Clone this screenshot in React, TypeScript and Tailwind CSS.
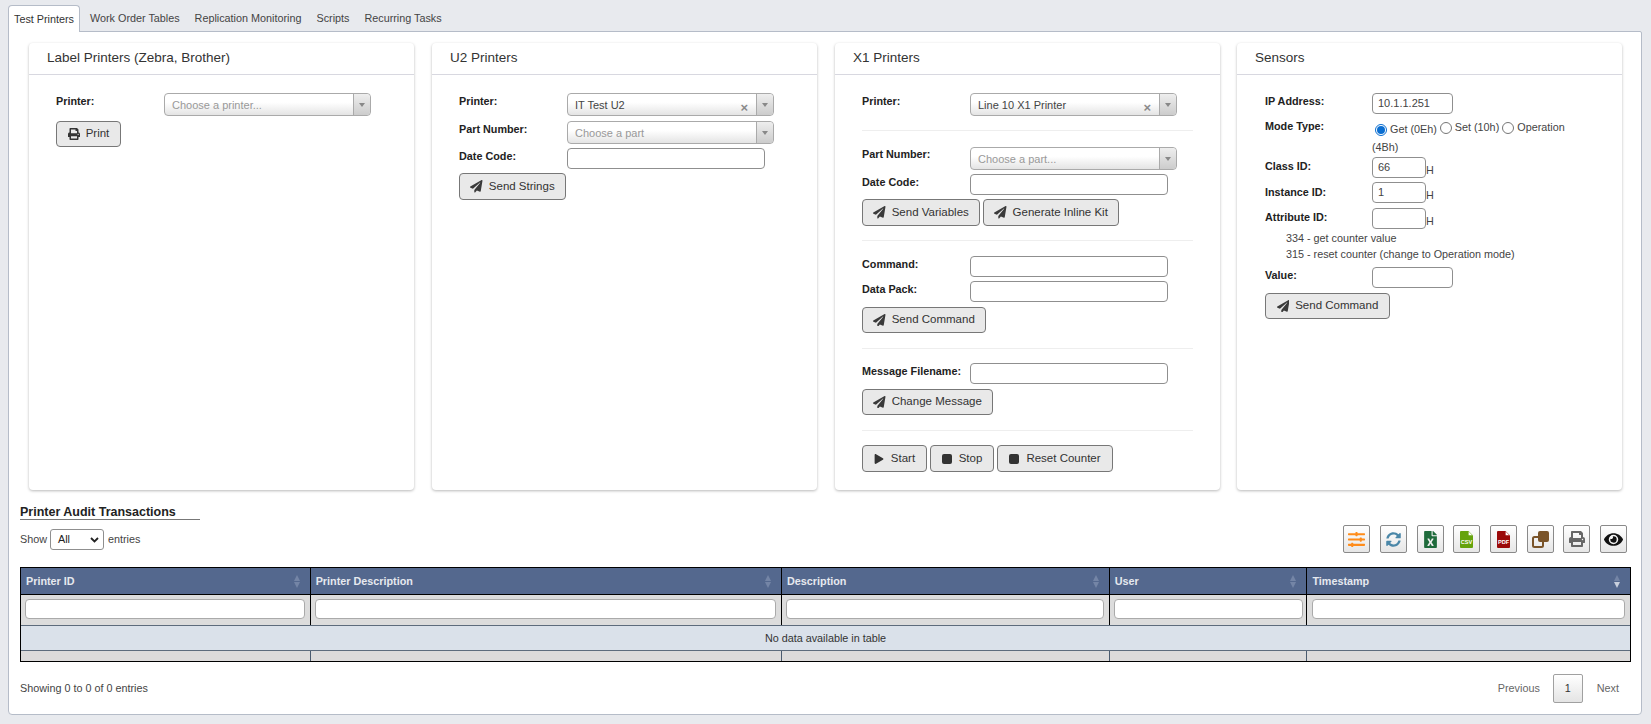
import React from "react";
import { FaPrint, FaPaperPlane, FaPlay, FaSlidersH, FaSyncAlt, FaFileExcel, FaEye } from "react-icons/fa";

function Select({ value, placeholder, clear }: { value?: string; placeholder?: string; clear?: boolean }) {
  return (
    <div className="flex h-[23px] w-[207px] items-center rounded-[4px] border border-[#aaaaaa] bg-gradient-to-b from-white from-40% to-[#e4e4e4] text-[11px]">
      <span className={value ? "flex-1 pl-[7px] pt-[2px] text-[#444444]" : "flex-1 pl-[7px] pt-[1px] text-[#999999]"}>{value ?? placeholder}</span>
      {clear && <span className="mr-[8px] mt-[5px] text-[13px] font-bold leading-none text-[#8a8a8a]">×</span>}
      <span className="flex h-full w-[17px] items-center justify-center rounded-r-[4px] border-l border-[#aaaaaa] bg-gradient-to-b from-[#eeeeee] to-[#cccccc]">
        <span className="h-0 w-0 border-x-[3px] border-t-[4px] border-x-transparent border-t-[#888888]" />
      </span>
    </div>
  );
}

function Input({ w = "w-[198px]", value }: { w?: string; value?: string }) {
  return (
    <div className={`flex h-[21px] ${w} items-center rounded-[4px] border border-[#8f8f8f] bg-white pl-[5px] text-[11px] text-[#444444]`}>{value}</div>
  );
}

function Btn({ icon, label, w, h = "h-[26px]", gap = "gap-[6px]" }: { icon: React.ReactNode; label: string; w: string; h?: string; gap?: string }) {
  return (
    <div className={`flex ${h} ${w} items-center justify-center ${gap} rounded-[4px] border border-[#777777] bg-[#e9e9e9] text-[11.5px] text-[#333333]`}>
      {icon}
      <span>{label}</span>
    </div>
  );
}

function Label({ children, w = "w-[108px]", pt = "pt-[1px]" }: { children: React.ReactNode; w?: string; pt?: string }) {
  return <div className={`${w} ${pt} shrink-0 text-[10.8px] font-bold leading-[14px] text-[#222222]`}>{children}</div>;
}

function Card({ title, children, cls = "" }: { title: string; children: React.ReactNode; cls?: string }) {
  return (
    <section className={`h-[447px] w-[385px] rounded-[4px] bg-white shadow-[0_1px_3px_rgba(0,0,0,0.28)] ${cls}`}>
      <h2 className="flex h-[32px] items-center border-b border-[#d8d8e0] pb-[1px] pl-[18px] text-[13.5px] font-normal text-[#333333]">{title}</h2>
      {children}
    </section>
  );
}

const send = <FaPaperPlane className="h-[12.5px] w-[12.5px] text-[#3a3a3a]" />;
const stop = <span className="h-[10px] w-[10px] rounded-[2px] bg-[#333333]" />;

function ToolBtn({ children }: { children: React.ReactNode }) {
  return <div className="flex h-[28px] w-[27px] items-center justify-center rounded-[2px] border border-[#8a8a8a] bg-gradient-to-b from-white to-[#e6e6e6]">{children}</div>;
}

function FileIcon({ color, label }: { color: string; label: string }) {
  return (
    <svg width="13" height="17" viewBox="0 0 13 17">
      <path d="M1 0h7.5L13 4.5V16a1 1 0 0 1-1 1H1a1 1 0 0 1-1-1V1a1 1 0 0 1 1-1z" fill={color} />
      <path d="M8.6 0.6v3.6h3.6z" fill="#ffffff" />
      <text x="6.5" y="12.5" textAnchor="middle" fontSize="5.6" fontWeight="700" fontFamily="'Liberation Sans', Arial, sans-serif" fill="#ffffff">{label}</text>
    </svg>
  );
}

function CopyIcon() {
  return (
    <svg width="17" height="17" viewBox="0 0 17 17">
      <rect x="1" y="6" width="10" height="10" rx="1.5" fill="none" stroke="#7a5429" strokeWidth="2" />
      <rect x="6" y="0" width="11" height="11" rx="2" fill="#7a5429" />
    </svg>
  );
}

const cols = ["w-[290px]", "w-[472px]", "w-[328px]", "w-[198px]", "w-[323px]"];
const filterPad = ["pl-[4px] pr-[5px]", "pl-[4px] pr-[5px]", "pl-[4px] pr-[5px]", "pl-[4px] pr-[3px]", "pl-[5px] pr-[5px]"];
const heads = ["Printer ID", "Printer Description", "Description", "User", "Timestamp"];

export default function App() {
  return (
    <div className="h-[724px] w-[1651px] overflow-hidden bg-[#e8eaee] pl-[8px] pt-[5px] font-['Liberation_Sans',Arial,sans-serif] text-[#333333]">
      <nav className="relative z-10 flex h-[27px] text-[10.8px] text-[#444444]">
        <div className="flex h-[27px] w-[72px] items-center justify-center rounded-t-[4px] border border-b-0 border-[#b5bcc8] bg-white text-[#333333]">Test Printers</div>
        <div className="ml-[10px] flex items-center gap-[15px]">
          <span>Work Order Tables</span>
          <span>Replication Monitoring</span>
          <span>Scripts</span>
          <span>Recurring Tasks</span>
        </div>
      </nav>
      <main className="-mt-px h-[684px] w-[1634px] rounded-b-[4px] rounded-tr-[2px] border border-[#b5bcc8] bg-white pl-[20px] pt-[11px]">
        <div className="flex gap-[18px]">
          <Card title="Label Printers (Zebra, Brother)">
            <div className="pl-[27px] pt-[18px]">
              <div className="flex">
                <Label>Printer:</Label>
                <Select placeholder="Choose a printer..." />
              </div>
              <div className="mt-[5px]">
                <Btn w="w-[65px]" icon={<FaPrint className="h-[12px] w-[12px] text-[#333333]" />} label="Print" />
              </div>
            </div>
          </Card>
          <Card title="U2 Printers">
            <div className="pl-[27px] pt-[18px]">
              <div className="flex">
                <Label>Printer:</Label>
                <Select value="IT Test U2" clear />
              </div>
              <div className="mt-[5px] flex">
                <Label>Part Number:</Label>
                <Select placeholder="Choose a part" />
              </div>
              <div className="mt-[4px] flex">
                <Label>Date Code:</Label>
                <Input />
              </div>
              <div className="mt-[4px]">
                <Btn w="w-[107px]" h="h-[27px]" icon={send} label="Send Strings" />
              </div>
            </div>
          </Card>
          <Card title="X1 Printers">
            <div className="px-[27px] pt-[18px]">
              <div className="flex">
                <Label>Printer:</Label>
                <Select value="Line 10 X1 Printer" clear />
              </div>
              <div className="mt-[14px] border-t border-[#eeeeee] pt-[16px]">
                <div className="flex">
                  <Label pt="pt-0">Part Number:</Label>
                  <Select placeholder="Choose a part..." />
                </div>
                <div className="mt-[4px] flex">
                  <Label>Date Code:</Label>
                  <Input />
                </div>
                <div className="mt-[4px] flex gap-[3px]">
                  <Btn w="w-[118px]" h="h-[27px]" icon={send} label="Send Variables" />
                  <Btn w="w-[136px]" h="h-[27px]" icon={send} label="Generate Inline Kit" />
                </div>
              </div>
              <div className="mt-[14px] border-t border-[#eeeeee] pt-[15px]">
                <div className="flex">
                  <Label>Command:</Label>
                  <Input />
                </div>
                <div className="mt-[4px] flex">
                  <Label>Data Pack:</Label>
                  <Input />
                </div>
                <div className="mt-[5px]">
                  <Btn w="w-[124px]" icon={send} label="Send Command" />
                </div>
              </div>
              <div className="mt-[15px] border-t border-[#eeeeee] pt-[14px]">
                <div className="flex">
                  <Label>Message Filename:</Label>
                  <Input />
                </div>
                <div className="mt-[5px]">
                  <Btn w="w-[131px]" icon={send} label="Change Message" />
                </div>
              </div>
              <div className="mt-[15px] flex gap-[3px] border-t border-[#eeeeee] pt-[14px]">
                <Btn w="w-[65px]" h="h-[27px]" gap="gap-[7px]" icon={<FaPlay className="h-[10px] w-[10px] text-[#333333]" />} label="Start" />
                <Btn w="w-[64px]" h="h-[27px]" gap="gap-[7px]" icon={stop} label="Stop" />
                <Btn w="w-[116px]" h="h-[27px]" gap="gap-[7px]" icon={stop} label="Reset Counter" />
              </div>
            </div>
          </Card>
          <Card title="Sensors" cls="-ml-px">
            <div className="pl-[28px] pt-[18px] text-[10.8px] text-[#444444]">
              <div className="flex">
                <Label w="w-[107px]">IP Address:</Label>
                <Input w="w-[81px]" value="10.1.1.251" />
              </div>
              <div className="mt-[3px] flex">
                <Label w="w-[107px]" pt="pt-[2px]">Mode Type:</Label>
                <div className="w-[205px] pt-[2px] leading-[17px]">
                  <label className="inline-flex items-center">
                    <span className="ml-[3px] mr-[3px] flex h-[12px] w-[12px] items-center justify-center rounded-full border border-[#0a6ed1]">
                      <span className="h-[8px] w-[8px] rounded-full bg-[#0a6ed1]" />
                    </span>
                    Get (0Eh)
                  </label>{" "}
                  <label className="inline-flex items-center">
                    <span className="mr-[3px] h-[12px] w-[12px] rounded-full border border-[#767676]" />
                    Set (10h)
                  </label>{" "}
                  <label className="inline-flex items-center">
                    <span className="mr-[3px] h-[12px] w-[12px] rounded-full border border-[#767676]" />
                    Operation
                  </label>{" "}
                  (4Bh)
                </div>
              </div>
              <div className="mt-[1px] flex">
                <Label w="w-[107px]" pt="pt-[2px]">Class ID:</Label>
                <Input w="w-[54px]" value="66" />
                <span className="mt-[5px]">H</span>
              </div>
              <div className="mt-[4px] flex">
                <Label w="w-[107px]" pt="pt-[3px]">Instance ID:</Label>
                <Input w="w-[54px]" value="1" />
                <span className="mt-[5px]">H</span>
              </div>
              <div className="mt-[5px] flex">
                <Label w="w-[107px]" pt="pt-[2px]">Attribute ID:</Label>
                <Input w="w-[54px]" />
                <span className="mt-[5px]">H</span>
              </div>
              <div className="ml-[21px] mt-[1px] leading-[16px]">
                <div>334 - get counter value</div>
                <div>315 - reset counter (change to Operation mode)</div>
              </div>
              <div className="mt-[5px] flex">
                <Label w="w-[107px]">Value:</Label>
                <Input w="w-[81px]" />
              </div>
              <div className="mt-[5px]">
                <Btn w="w-[125px]" icon={send} label="Send Command" />
              </div>
            </div>
          </Card>
        </div>

        <div className="-ml-[9px] mt-[13px] w-[1612px]">
          <h3 className="h-[17px] w-[180px] border-b border-[#777777] pt-[2px] text-[12.5px] font-bold leading-[14px] text-[#222222]">Printer Audit Transactions</h3>
          <div className="flex h-[47px] items-start justify-between">
            <div className="mt-[9px] flex items-center gap-[3px] text-[10.8px] text-[#444444]">
              <span>Show</span>
              <span className="mr-[1px] flex h-[21px] w-[54px] items-center justify-between rounded-[3px] border border-[#8f8f8f] pl-[7px] pr-[4px] text-[#222222]">
                All
                <svg width="9" height="6" viewBox="0 0 9 6"><path d="M1 1l3.5 3.5L8 1" fill="none" stroke="#222" strokeWidth="1.8" /></svg>
              </span>
              <span>entries</span>
            </div>
            <div className="mr-[5px] mt-[5px] flex gap-[9.7px]">
              <ToolBtn><FaSlidersH className="h-[17px] w-[17px] text-[#ff8c1a]" /></ToolBtn>
              <ToolBtn><FaSyncAlt className="h-[15px] w-[15px] text-[#4a87a8]" /></ToolBtn>
              <ToolBtn><FaFileExcel className="h-[17px] w-[13px] text-[#1f6b3c]" /></ToolBtn>
              <ToolBtn><FileIcon color="#65a30d" label="CSV" /></ToolBtn>
              <ToolBtn><FileIcon color="#9b0a0a" label="PDF" /></ToolBtn>
              <ToolBtn><CopyIcon /></ToolBtn>
              <ToolBtn><FaPrint className="h-[16px] w-[16px] text-[#666666]" /></ToolBtn>
              <ToolBtn><FaEye className="h-[19px] w-[19px] text-[#111111]" /></ToolBtn>
            </div>
          </div>
          <div className="w-[1611px] border border-black text-[10.8px]">
            <div className="flex h-[26px] bg-[#54688e] font-bold text-[#e6e9ef]">
              {heads.map((h, i) => (
                <div key={h} className={`${cols[i]} flex items-center justify-between pl-[5px] pr-[10px] ${i < 4 ? "border-r border-black" : ""}`}>
                  <span>{h}</span>
                  <span className="flex flex-col gap-[1px]">
                    <span className="h-0 w-0 border-x-[3.5px] border-b-[6px] border-x-transparent border-b-[#7485a6]" />
                    <span className={`h-0 w-0 border-x-[3.5px] border-t-[6px] border-x-transparent ${i === 4 ? "border-t-[#c9d0dd]" : "border-t-[#7485a6]"}`} />
                  </span>
                </div>
              ))}
            </div>
            <div className="flex h-[31px] border-t border-black bg-[#dcdcdc]">
              {heads.map((h, i) => (
                <div key={h} className={`${cols[i]} ${filterPad[i]} pt-[4px] ${i < 4 ? "border-r border-black" : ""}`}>
                  <div className="h-[20px] w-full rounded-[4px] border border-[#aaaaaa] bg-white" />
                </div>
              ))}
            </div>
            <div className="flex h-[26px] items-center justify-center border-y border-[#5d6b7c] bg-[#dae1ea] text-[#333333]">No data available in table</div>
            <div className="flex h-[10px] bg-[#dcdada]">
              {heads.map((h, i) => (
                <div key={h} className={`${cols[i]} ${i < 4 ? "border-r border-[#4a5a6e]" : ""}`} />
              ))}
            </div>
          </div>
          <div className="mt-[12px] flex w-[1611px] items-center justify-between text-[10.8px] text-[#444444]">
            <span>Showing 0 to 0 of 0 entries</span>
            <div className="mr-[12px] flex items-center">
              <span className="text-[#666666]">Previous</span>
              <span className="ml-[13px] flex h-[29px] w-[30px] items-center justify-center rounded-[2px] border border-[#a0a0a0] bg-gradient-to-b from-white to-[#e4e4e4] text-[#333333]">1</span>
              <span className="ml-[14px] text-[#666666]">Next</span>
            </div>
          </div>
        </div>
      </main>
    </div>
  );
}
